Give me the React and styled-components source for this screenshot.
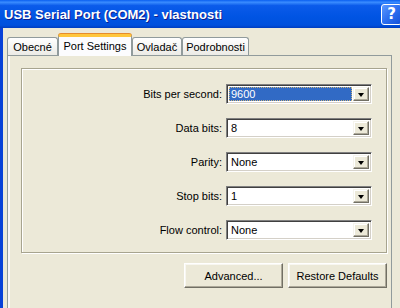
import { Fragment } from "react";
import styled, { createGlobalStyle } from "styled-components";

const GlobalStyle = createGlobalStyle`
  html, body {
    margin: 0;
    padding: 0;
    overflow: hidden;
    background: #ECE9D8;
  }
  body {
    font-family: "Liberation Sans", Arial, sans-serif;
    font-size: 11px;
    color: #000;
  }
`

const Window = styled.div`
  width: 404px;
  height: 308px;
  display: flex;
  flex-direction: column;
  overflow: hidden;
`
const TitleBar = styled.div`
  height: 28px;
  flex: none;
  display: flex;
  align-items: center;
  justify-content: space-between;
  padding: 0 2px 0 4px;
  background: linear-gradient(to bottom, #0A5FF0 0%, #3A8CFF 8%, #0B5BEA 20%, #0054E3 60%, #0050DD 90%, #003DC0 100%);
`
const Title = styled.div`
  font-family: "Liberation Sans", Arial, sans-serif;
  font-weight: bold;
  font-size: 13px;
  color: #fff;
  text-shadow: 1px 1px 0 #0F1E8E;
`
const HelpButton = styled.div`
  width: 21px;
  height: 21px;
  box-sizing: border-box;
  border: 1px solid #fff;
  border-radius: 3px;
  background: linear-gradient(135deg, #5C99FF 0%, #2D6FF0 50%, #1350D8 100%);
  color: #fff;
  font-family: "DejaVu Sans", sans-serif;
  font-weight: bold;
  font-size: 15px;
  display: flex;
  align-items: center;
  justify-content: center;
`
const Frame = styled.div`
  flex: 1;
  display: flex;
  flex-direction: column;
  border-left: 3px solid #0841D8;
  padding: 6px 0 0 4px;
  background: #ECE9D8;
`
const TabStrip = styled.div`
  display: flex;
  align-items: flex-end;
  height: 21px;
  flex: none;
`
const Tab = styled.div`
  position: relative;
  z-index: ${p => (p.$active ? 2 : 1)};
  width: ${p => p.$w}px;
  height: ${p => (p.$active ? 22 : 18)}px;
  margin-bottom: ${p => (p.$active ? -1 : 0)}px;
  box-sizing: border-box;
  border: 1px solid #919B9C;
  border-bottom: none;
  border-top: ${p => (p.$active ? "3px solid #FFC73C" : "1px solid #919B9C")};
  border-radius: 3px 3px 0 0;
  background: ${p => (p.$active ? "#FCFCFE" : "linear-gradient(to bottom, #FFFFFF, #ECEBE6)")};
  box-shadow: ${p => (p.$active ? "0 -1px 0 #E68B2C" : "none")};
  display: flex;
  align-items: center;
  justify-content: center;
  padding-bottom: ${p => (p.$active ? 2 : 0)}px;
  white-space: nowrap;
`
const Sheet = styled.div`
  flex: 1;
  display: flex;
  flex-direction: column;
  margin-right: 12px;
  border: 1px solid #919B9C;
  border-bottom: none;
  box-shadow: inset 2px 0 0 #FBF8F9;
  background: #ECE9D8;
  padding: 12px 4px 0 13px;
`
const GroupBox = styled.div`
  display: grid;
  grid-template-columns: 1fr 146px;
  column-gap: 4px;
  row-gap: 14px;
  align-items: center;
  padding: 15px 14px 12px 0;
  border: 1px solid #A7A48F;
  box-shadow: inset 1px 1px 0 #fff, 1px 1px 0 #fff;
`
const Label = styled.div`
  text-align: right;
  white-space: nowrap;
`
const Combo = styled.div`
  height: 20px;
  box-sizing: border-box;
  display: flex;
  align-items: stretch;
  background: #fff;
  border-top: 1px solid #808080;
  border-left: 1px solid #808080;
  border-right: 1px solid #fff;
  border-bottom: 1px solid #fff;
  box-shadow: inset 1px 1px 0 #404040, inset -1px -1px 0 #D4D0C8;
  padding: 2px;
`
const ComboValue = styled.div`
  flex: 1;
  display: flex;
  align-items: center;
  padding-left: 2px;
  margin-right: 1px;
  color: ${p => (p.$selected ? "#fff" : "#000")};
  background: ${p => (p.$selected ? "#316AC5" : "transparent")};
  outline: ${p => (p.$selected ? "1px dotted #C9B27A" : "none")};
  outline-offset: -1px;
`
const DropButton = styled.div`
  width: 16px;
  box-sizing: border-box;
  background: #ECE9D8;
  border-top: 1px solid #F5F4EC;
  border-left: 1px solid #F5F4EC;
  border-right: 1px solid #716F64;
  border-bottom: 1px solid #716F64;
  box-shadow: inset -1px -1px 0 #ACA899, inset 1px 1px 0 #fff;
  display: flex;
  align-items: center;
  justify-content: center;
`
const Arrow = styled.div`
  width: 0;
  height: 0;
  border-left: 3.5px solid transparent;
  border-right: 3.5px solid transparent;
  border-top: 4px solid #000;
  margin-top: 1px;
`
const ButtonRow = styled.div`
  display: flex;
  justify-content: flex-end;
  gap: 5px;
  margin-top: 10px;
`
const Button = styled.div`
  width: 99px;
  height: 25px;
  box-sizing: border-box;
  display: flex;
  align-items: center;
  justify-content: center;
  background: #ECE9D8;
  border-top: 1px solid #fff;
  border-left: 1px solid #fff;
  border-right: 1px solid #716F64;
  border-bottom: 1px solid #716F64;
  box-shadow: inset -1px -1px 0 #ACA899, inset 1px 1px 0 #F8F7F1;
`

const rows = [
  { label: "Bits per second:", value: "9600", selected: true },
  { label: "Data bits:", value: "8" },
  { label: "Parity:", value: "None" },
  { label: "Stop bits:", value: "1" },
  { label: "Flow control:", value: "None" },
]

const tabs = [
  { name: "Obecné", w: 51 },
  { name: "Port Settings", w: 74, active: true },
  { name: "Ovladač", w: 50 },
  { name: "Podrobnosti", w: 67 },
]

export default function App() {
  return (
    <>
      <GlobalStyle />
      <Window>
        <TitleBar>
          <Title>USB Serial Port (COM2) - vlastnosti</Title>
          <HelpButton>?</HelpButton>
        </TitleBar>
        <Frame>
          <TabStrip>
            {tabs.map(t => (
              <Tab key={t.name} $w={t.w} $active={t.active}>{t.name}</Tab>
            ))}
          </TabStrip>
          <Sheet>
            <GroupBox>
              {rows.map(r => (
                <Fragment key={r.label}>
                  <Label>{r.label}</Label>
                  <Combo>
                    <ComboValue $selected={r.selected}>{r.value}</ComboValue>
                    <DropButton><Arrow /></DropButton>
                  </Combo>
                </Fragment>
              ))}
            </GroupBox>
            <ButtonRow>
              <Button>Advanced...</Button>
              <Button>Restore Defaults</Button>
            </ButtonRow>
          </Sheet>
        </Frame>
      </Window>
    </>
  )
}
